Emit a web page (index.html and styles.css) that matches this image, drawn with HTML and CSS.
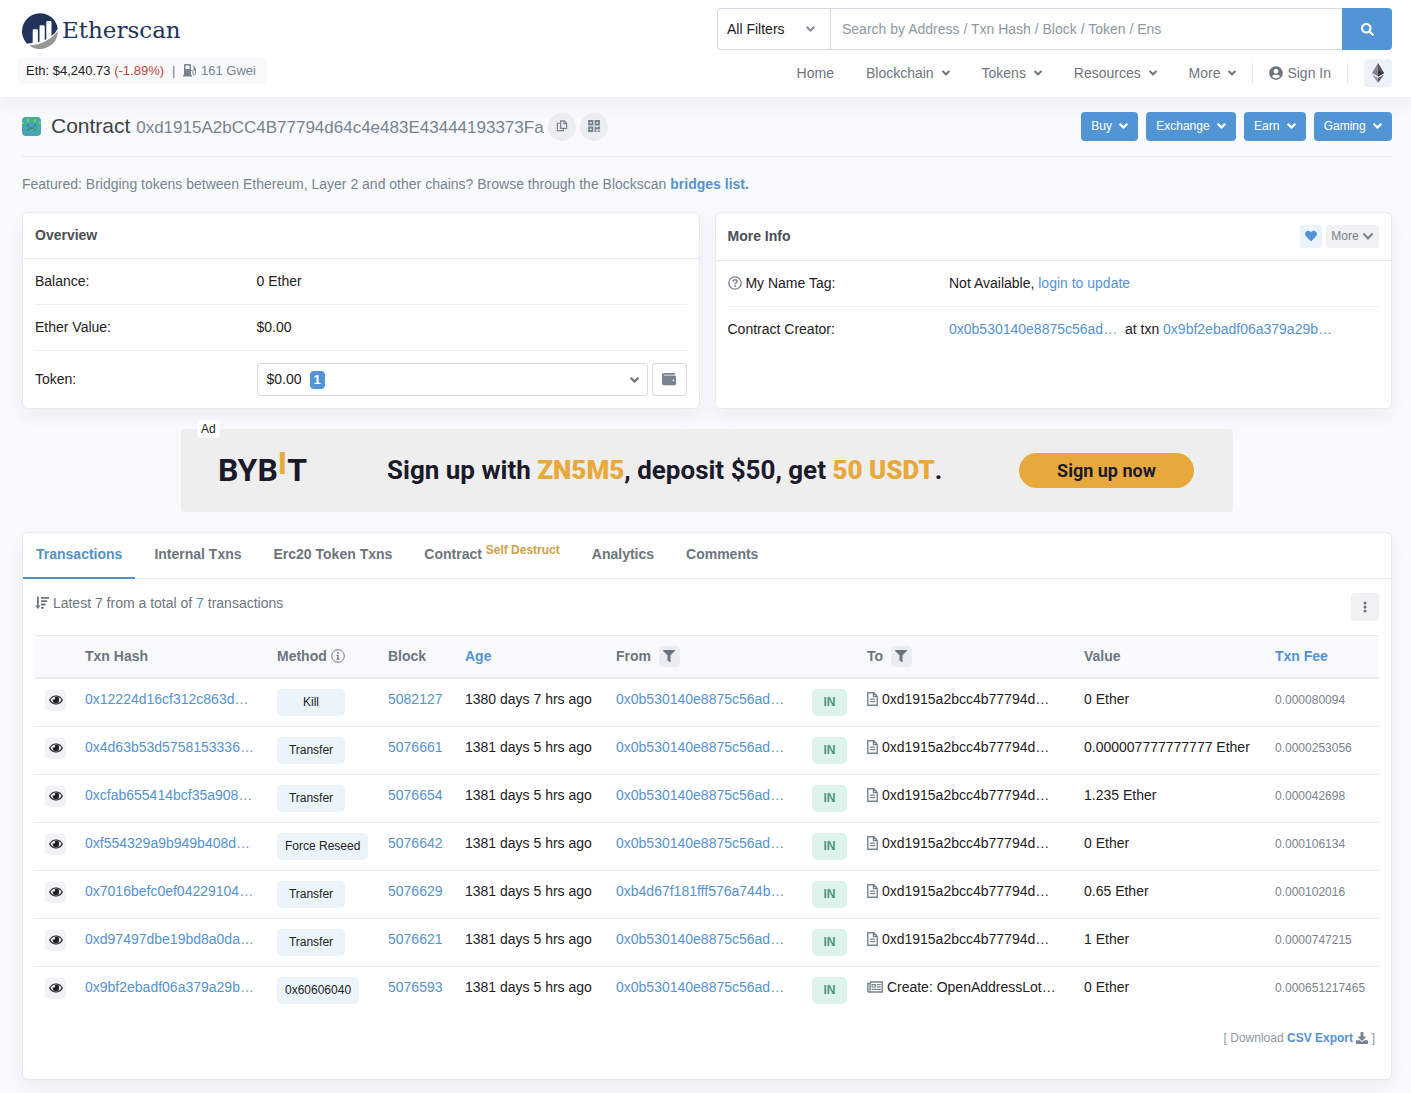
FILE: index.html
```html
<!DOCTYPE html>
<html lang="en">
<head>
  <meta charset="UTF-8" />
  <meta name="viewport" content="width=device-width, initial-scale=1.0" />
  <title>Contract Address | Etherscan</title>
  <link rel="stylesheet" href="styles.css">
</head>
<body>
<!-- Icon sprite -->
<svg class="sprite" aria-hidden="true">
  <symbol id="i-angle" viewBox="0 0 320 512"><path d="M143 352.3L7 216.3c-9.4-9.4-9.4-24.6 0-33.9l22.6-22.6c9.4-9.4 24.6-9.4 33.9 0l96.4 96.4 96.4-96.4c9.4-9.4 24.6-9.4 33.9 0l22.6 22.6c9.4 9.4 9.4 24.6 0 33.9l-136 136c-9.2 9.4-24.4 9.4-33.8 0z"/></symbol>
  <symbol id="i-chevron" viewBox="0 0 12 12"><path d="M1.5 3.5L6 8.5l4.500-5" fill="none" stroke="currentColor" stroke-width="2"/></symbol>
  <symbol id="i-search" viewBox="0 0 512 512"><path d="M505 442.7L405.3 343c-4.5-4.5-10.6-7-17-7H372c27.6-35.3 44-79.7 44-128C416 93.1 322.9 0 208 0S0 93.1 0 208s93.1 208 208 208c48.3 0 92.700-16.4 128-44v16.3c0 6.4 2.5 12.5 7 17l99.7 99.7c9.4 9.4 24.6 9.4 33.9 0l28.3-28.3c9.4-9.4 9.4-24.6.1-34zM208 336c-70.7 0-128-57.2-128-128 0-70.7 57.2-128 128-128 70.7 0 128 57.2 128 128 0 70.7-57.2 128-128 128z"/></symbol>
  <symbol id="i-user" viewBox="0 0 496 512"><path d="M248 8C111 8 0 119 0 256s111 248 248 248 248-111 248-248S385 8 248 8zm0 96c48.6 0 88 39.4 88 88s-39.4 88-88 88-88-39.4-88-88 39.4-88 88-88zm0 344c-58.7 0-111.3-26.6-146.5-68.2 18.8-35.4 55.6-59.8 98.5-59.8 2.4 0 4.8.4 7.1 1.1 13 4.2 26.6 6.9 40.9 6.9 14.3 0 28-2.7 40.9-6.9 2.300-.7 4.700-1.1 7.100-1.1 42.9 0 79.7 24.4 98.5 59.8C359.3 421.4 306.7 448 248 448z"/></symbol>
  <symbol id="i-gas" viewBox="0 0 14 14"><path fill-rule="evenodd" d="M1 12V2Q1 1 2 1h5q1 0 1 1v10h1v1.500H0V12zM2.500 2.500v3.500h4V2.500z"/><path d="M8 7.500h1q1 0 1 1v2q0 1.500 1.200 1.500t1.200-1.500V5.500L10 2.500" fill="none" stroke="currentColor"/><path d="M10.500 4l2 1.500v2h-1.200q-.8 0-.8-.8z"/></symbol>
  <symbol id="i-copy" viewBox="0 0 12 13"><path d="M4.500 1h4l2.500 2.500v5.500H4.500zM8 1v3h3M4.500 3.500H1v8h6.500V9" fill="none" stroke="currentColor" stroke-width="1.300"/></symbol>
  <symbol id="i-qr" viewBox="0 0 12 12"><path d="M1 1h3.500v3.500H1zM7.500 1H11v3.500H7.500zM1 7.500h3.500V11H1z" fill="none" stroke="currentColor" stroke-width="1.800"/><path d="M6.600 6.600h1.800v1H10v-1h2v3H9.500V9H8.400v3H6.600zM9.500 10.500H11V12H9.500zM11.300 10.500h.7V12h-.7z"/></symbol>
  <symbol id="i-heart" viewBox="0 0 512 512"><path d="M462.3 62.6C407.5 15.9 326 24.3 275.7 76.2L256 96.5l-19.7-20.3C186.1 24.3 104.5 15.9 49.7 62.6c-62.8 53.6-66.1 149.8-9.9 207.9l193.5 199.8c12.5 12.9 32.8 12.9 45.3 0l193.5-199.8c56.3-58.1 53-154.3-9.8-207.9z"/></symbol>
  <symbol id="i-wallet" viewBox="0 0 512 512"><path d="M461.2 128H80c-8.840 0-16-7.160-16-16s7.160-16 16-16h384c8.840 0 16-7.160 16-16 0-26.510-21.490-48-48-48H64C28.650 32 0 60.650 0 96v320c0 35.350 28.650 64 64 64h397.200c28.020 0 50.800-21.530 50.800-48V176c0-26.470-22.780-48-50.800-48zM416 336c-17.670 0-32-14.330-32-32s14.330-32 32-32 32 14.330 32 32-14.330 32-32 32z"/></symbol>
  <symbol id="i-question" viewBox="0 0 14 14"><circle cx="7" cy="7" r="6.200" fill="none" stroke="currentColor" stroke-width="1.300"/><path d="M5 5.600Q5.100 3.800 7 3.800t2 1.600q0 1-1 1.500t-1 1.300" fill="none" stroke="currentColor" stroke-width="1.500"/><circle cx="7" cy="10" r="1"/></symbol>
  <symbol id="i-info" viewBox="0 0 14 14"><circle cx="7" cy="7" r="6.300" fill="none" stroke="currentColor"/><circle cx="7" cy="4" r=".9"/><path d="M5.500 6h2.200v3.800h.9v.9H5.400v-.9h.9V6.900h-.8z"/></symbol>
  <symbol id="i-sort" viewBox="0 0 14 13"><path d="M2 0h1.800v9h1.700L2.900 12.500.2 9H2zM6 .5h8v1.800H6zM6 3.800h6.200v1.800H6zM6 7.100h4.500v1.800H6zM6 10.400h2.800v1.800H6z"/></symbol>
  <symbol id="i-dots" viewBox="0 0 4 12"><circle cx="2" cy="2" r="1.500"/><circle cx="2" cy="6" r="1.500"/><circle cx="2" cy="10" r="1.500"/></symbol>
  <symbol id="i-filter" viewBox="0 0 512 512"><path d="M487.976 0H24.028C2.710 0-8.047 25.866 7.058 40.971L192 225.941V432c0 7.831 3.821 15.170 10.237 19.662l80 55.980C298.020 518.690 320 507.493 320 487.980V225.941l184.947-184.970C520.021 25.896 509.338 0 487.976 0z"/></symbol>
  <symbol id="i-eye" viewBox="0 0 14 10"><path d="M.7 5Q3 1 7 1t6.300 4Q11 9 7 9T.7 5z" fill="none" stroke="currentColor" stroke-width="1.200"/><path d="M7 1.800a3.200 3.200 0 1 1-3.100 2.400q1 .6 1.800 0t.2-2.100Q6.500 1.800 7 1.800z"/></symbol>
  <symbol id="i-file" viewBox="0 0 11 14"><path d="M.8.800h6l3.400 3.400v9H.8zM6.500 1v3.500H10" fill="none" stroke="currentColor" stroke-width="1.400"/><path d="M3 6.500h5v1.200H3zM3 9h5v1.200H3z"/></symbol>
  <symbol id="i-news" viewBox="0 0 16 12"><path d="M3 1h12.200v10H2Q.8 11 .8 9.800V2.500H3V10" fill="none" stroke="currentColor" stroke-width="1.400"/><path fill-rule="evenodd" d="M4.500 3h4.500v3.500H4.500zM5.700 4v1.500h2V4zM10 3h3.800v1.100H10zM10 5.300h3.800v1.100H10zM4.500 7.800h9.300V9H4.500z"/></symbol>
  <symbol id="i-download" viewBox="0 0 512 512"><path d="M216 0h80c13.300 0 24 10.700 24 24v168h87.700c17.800 0 26.700 21.500 14.100 34.100L269.700 378.300c-7.500 7.500-19.800 7.500-27.300 0L90.100 226.100c-12.600-12.600-3.700-34.100 14.100-34.100H192V24c0-13.300 10.700-24 24-24zm296 376v112c0 13.300-10.700 24-24 24H24c-13.300 0-24-10.700-24-24V376c0-13.300 10.700-24 24-24h146.700l49 49c20.100 20.100 52.500 20.100 72.600 0l49-49H488c13.300 0 24 10.700 24 24z"/></symbol>
</svg>

<!-- Header -->
<header class="site-header">
  <div class="brand">
    <a href="#" class="logo">
      <svg class="logo-mark" viewBox="0 0 36 36" aria-hidden="true">
        <path fill="#21325b" d="M4.800 30.500A18 18 0 1 1 35.800 15.500q-2 4.500-6.300 7.600V9.200q0-1.200-1.200-1.200h-2.800q-1.200 0-1.200 1.200v17q-.9.500-1.600.8V13.500q0-1.200-1.200-1.200h-2.800q-1.200 0-1.200 1.200v15.300l-1.600.4V17.500q0-1.200-1.200-1.200h-2.800q-1.200 0-1.200 1.200v12.300q-3 .9-5.900.7z"/>
        <path fill="#979695" d="M35.900 18A18 18 0 0 1 7.200 32.400Q25 31.500 35.900 18z"/>
      </svg>
      <span>Etherscan</span>
    </a>
    <div class="price">
      <span>Eth: $4,240.73 <span class="down">(-1.89%)</span></span>
      <span class="bar">|</span>
      <span class="gas"><svg class="icon"><use href="#i-gas"/></svg> 161 Gwei</span>
    </div>
  </div>

  <div class="header-right">
    <form class="search">
      <div class="search-filter">
        <select aria-label="Filter">
          <option>All Filters</option>
          <option>Addresses</option>
          <option>Tokens</option>
        </select>
        <svg class="caret"><use href="#i-angle"/></svg>
      </div>
      <input type="text" aria-label="Search" placeholder="Search by Address / Txn Hash / Block / Token / Ens">
      <button type="button" aria-label="Search"><svg class="icon"><use href="#i-search"/></svg></button>
    </form>
    <nav class="main-nav">
      <a href="#">Home</a>
      <a href="#">Blockchain <svg class="caret"><use href="#i-angle"/></svg></a>
      <a href="#">Tokens <svg class="caret"><use href="#i-angle"/></svg></a>
      <a href="#">Resources <svg class="caret"><use href="#i-angle"/></svg></a>
      <a href="#">More <svg class="caret"><use href="#i-angle"/></svg></a>
      <a href="#" class="sign-in"><svg class="icon"><use href="#i-user"/></svg>Sign In</a>
      <button type="button" class="network" aria-label="Network">
        <svg viewBox="0 0 12 20" aria-hidden="true">
          <path fill="#85868d" d="M6 0l6 10-6 3.500L0 10z"/>
          <path fill="#55565e" d="M6 0l6 10-6 3.500z"/>
          <path fill="#3a3b42" d="M6 7.300l6 2.700-6 3.500z"/>
          <path fill="#96979d" d="M0 11.500L6 15v5z"/>
          <path fill="#5c5d65" d="M12 11.500L6 15v5z"/>
        </svg>
      </button>
    </nav>
  </div>
</header>

<main>
  <!-- Page title -->
  <div class="title-row">
    <svg class="blockie" viewBox="0 0 8 8" shape-rendering="crispEdges" aria-hidden="true">
      <path fill="#49a5b5" d="M0 0h8v8H0z"/>
      <path fill="#45b08f" d="M1 0h6v1H1zM3 1h2v1H3zM1 2h1v1H1zM6 2h1v1H6zM0 3h1v1H0zM7 3h1v1H7zM3 5h2v1H3zM1 6h1v1H1zM6 6h1v1H6z"/>
      <path fill="#62dd62" d="M2 1h1v1H2zM5 1h1v1H5zM0 2h1v1H0zM7 2h1v1H7z"/>
      <path fill="#358a8c" d="M2 3h1v1H2zM5 3h1v1H5zM3 4h2v1H3zM2 5h1v1H2zM5 5h1v1H5z"/>
    </svg>
    <h1>Contract <small>0xd1915A2bCC4B77794d64c4e483E43444193373Fa</small></h1>
    <button type="button" class="round" aria-label="Copy address"><svg class="icon"><use href="#i-copy"/></svg></button>
    <button type="button" class="round" aria-label="Show QR code"><svg class="icon"><use href="#i-qr"/></svg></button>
    <div class="actions">
      <button type="button">Buy <svg class="caret"><use href="#i-angle"/></svg></button>
      <button type="button">Exchange <svg class="caret"><use href="#i-angle"/></svg></button>
      <button type="button">Earn <svg class="caret"><use href="#i-angle"/></svg></button>
      <button type="button">Gaming <svg class="caret"><use href="#i-angle"/></svg></button>
    </div>
  </div>
  <p class="featured">Featured: Bridging tokens between Ethereum, Layer 2 and other chains? Browse through the Blockscan <a href="#">bridges list.</a></p>

  <!-- Summary cards -->
  <div class="summary">
    <section class="card">
      <div class="card-header"><h2>Overview</h2></div>
      <div class="card-body">
        <div class="info-row"><span>Balance:</span><span>0 Ether</span></div>
        <div class="info-row"><span>Ether Value:</span><span>$0.00</span></div>
        <div class="info-row">
          <span>Token:</span>
          <div class="token">
            <button type="button" class="token-select" aria-haspopup="listbox">$0.00 <span class="count">1</span><svg class="caret"><use href="#i-angle"/></svg></button>
            <button type="button" class="token-wallet" aria-label="View tokens"><svg class="icon"><use href="#i-wallet"/></svg></button>
          </div>
        </div>
      </div>
    </section>
    <section class="card">
      <div class="card-header">
        <h2>More Info</h2>
        <button type="button" class="fav" aria-label="Add to favourites"><svg class="icon"><use href="#i-heart"/></svg></button>
        <button type="button" class="more">More <svg class="icon"><use href="#i-chevron"/></svg></button>
      </div>
      <div class="card-body">
        <div class="info-row"><span><svg class="icon muted"><use href="#i-question"/></svg> My Name Tag:</span><span>Not Available, <a href="#">login to update</a></span></div>
        <div class="info-row"><span>Contract Creator:</span><span><a href="#">0x0b530140e8875c56ad…</a>&nbsp; at txn <a href="#">0x9bf2ebadf06a379a29b…</a></span></div>
      </div>
    </section>
  </div>

  <!-- Banner -->
  <div class="ad">
    <span class="ad-label">Ad</span>
    <span class="ad-brand">BYB<i>I</i>T</span>
    <span class="ad-text">Sign up with <b>ZN5M5</b>, deposit $50, get <b>50 USDT</b>.</span>
    <a href="#" class="ad-button">Sign up now</a>
  </div>

  <!-- Transactions -->
  <section class="card">
    <nav class="tabs">
      <a href="#" class="active">Transactions</a>
      <a href="#">Internal Txns</a>
      <a href="#">Erc20 Token Txns</a>
      <a href="#">Contract <span class="destruct">Self Destruct</span></a>
      <a href="#">Analytics</a>
      <a href="#">Comments</a>
    </nav>
    <div class="tab-body">
      <div class="list-top">
        <p><svg class="icon"><use href="#i-sort"/></svg> Latest 7 from a total of <a href="#">7</a> transactions</p>
        <button type="button" aria-label="Options"><svg class="icon"><use href="#i-dots"/></svg></button>
      </div>
      <div class="table-wrap">
        <table>
          <colgroup>
            <col class="c-eye"><col class="c-hash"><col class="c-method"><col class="c-block"><col class="c-age">
            <col class="c-from"><col class="c-dir"><col class="c-to"><col class="c-value"><col class="c-fee">
          </colgroup>
          <thead>
            <tr>
              <th></th>
              <th>Txn Hash</th>
              <th>Method <svg class="icon"><use href="#i-info"/></svg></th>
              <th>Block</th>
              <th><a href="#">Age</a></th>
              <th>From <button type="button" class="filter" aria-label="Filter From"><svg class="icon"><use href="#i-filter"/></svg></button></th>
              <th></th>
              <th>To <button type="button" class="filter" aria-label="Filter To"><svg class="icon"><use href="#i-filter"/></svg></button></th>
              <th>Value</th>
              <th><a href="#">Txn Fee</a></th>
            </tr>
          </thead>
          <tbody>
            <tr>
              <td><button type="button" class="eye" aria-label="Preview"><svg class="icon"><use href="#i-eye"/></svg></button></td>
              <td><a href="#">0x12224d16cf312c863d…</a></td>
              <td><span class="method">Kill</span></td>
              <td><a href="#">5082127</a></td>
              <td>1380 days 7 hrs ago</td>
              <td><a href="#">0x0b530140e8875c56ad…</a></td>
              <td><span class="in">IN</span></td>
              <td><svg class="icon file"><use href="#i-file"/></svg> 0xd1915a2bcc4b77794d…</td>
              <td>0 Ether</td>
              <td class="fee">0.000080094</td>
            </tr>
            <tr>
              <td><button type="button" class="eye" aria-label="Preview"><svg class="icon"><use href="#i-eye"/></svg></button></td>
              <td><a href="#">0x4d63b53d5758153336…</a></td>
              <td><span class="method">Transfer</span></td>
              <td><a href="#">5076661</a></td>
              <td>1381 days 5 hrs ago</td>
              <td><a href="#">0x0b530140e8875c56ad…</a></td>
              <td><span class="in">IN</span></td>
              <td><svg class="icon file"><use href="#i-file"/></svg> 0xd1915a2bcc4b77794d…</td>
              <td>0.000007777777777 Ether</td>
              <td class="fee">0.0000253056</td>
            </tr>
            <tr>
              <td><button type="button" class="eye" aria-label="Preview"><svg class="icon"><use href="#i-eye"/></svg></button></td>
              <td><a href="#">0xcfab655414bcf35a908…</a></td>
              <td><span class="method">Transfer</span></td>
              <td><a href="#">5076654</a></td>
              <td>1381 days 5 hrs ago</td>
              <td><a href="#">0x0b530140e8875c56ad…</a></td>
              <td><span class="in">IN</span></td>
              <td><svg class="icon file"><use href="#i-file"/></svg> 0xd1915a2bcc4b77794d…</td>
              <td>1.235 Ether</td>
              <td class="fee">0.000042698</td>
            </tr>
            <tr>
              <td><button type="button" class="eye" aria-label="Preview"><svg class="icon"><use href="#i-eye"/></svg></button></td>
              <td><a href="#">0xf554329a9b949b408d…</a></td>
              <td><span class="method">Force Reseed</span></td>
              <td><a href="#">5076642</a></td>
              <td>1381 days 5 hrs ago</td>
              <td><a href="#">0x0b530140e8875c56ad…</a></td>
              <td><span class="in">IN</span></td>
              <td><svg class="icon file"><use href="#i-file"/></svg> 0xd1915a2bcc4b77794d…</td>
              <td>0 Ether</td>
              <td class="fee">0.000106134</td>
            </tr>
            <tr>
              <td><button type="button" class="eye" aria-label="Preview"><svg class="icon"><use href="#i-eye"/></svg></button></td>
              <td><a href="#">0x7016befc0ef04229104…</a></td>
              <td><span class="method">Transfer</span></td>
              <td><a href="#">5076629</a></td>
              <td>1381 days 5 hrs ago</td>
              <td><a href="#">0xb4d67f181fff576a744b…</a></td>
              <td><span class="in">IN</span></td>
              <td><svg class="icon file"><use href="#i-file"/></svg> 0xd1915a2bcc4b77794d…</td>
              <td>0.65 Ether</td>
              <td class="fee">0.000102016</td>
            </tr>
            <tr>
              <td><button type="button" class="eye" aria-label="Preview"><svg class="icon"><use href="#i-eye"/></svg></button></td>
              <td><a href="#">0xd97497dbe19bd8a0da…</a></td>
              <td><span class="method">Transfer</span></td>
              <td><a href="#">5076621</a></td>
              <td>1381 days 5 hrs ago</td>
              <td><a href="#">0x0b530140e8875c56ad…</a></td>
              <td><span class="in">IN</span></td>
              <td><svg class="icon file"><use href="#i-file"/></svg> 0xd1915a2bcc4b77794d…</td>
              <td>1 Ether</td>
              <td class="fee">0.0000747215</td>
            </tr>
            <tr>
              <td><button type="button" class="eye" aria-label="Preview"><svg class="icon"><use href="#i-eye"/></svg></button></td>
              <td><a href="#">0x9bf2ebadf06a379a29b…</a></td>
              <td><span class="method">0x60606040</span></td>
              <td><a href="#">5076593</a></td>
              <td>1381 days 5 hrs ago</td>
              <td><a href="#">0x0b530140e8875c56ad…</a></td>
              <td><span class="in">IN</span></td>
              <td><svg class="icon news"><use href="#i-news"/></svg> Create: OpenAddressLot…</td>
              <td>0 Ether</td>
              <td class="fee">0.000651217465</td>
            </tr>
          </tbody>
        </table>
      </div>
      <p class="export">[ Download <a href="#">CSV Export</a> <svg class="icon"><use href="#i-download"/></svg> ]</p>
    </div>
  </section>
</main>
</body>
</html>
```
FILE: styles.css
```css
/* Global Styles */
* {
  box-sizing: border-box;
}
body {
  margin: 0;
  font-family: "Liberation Sans", Arial, sans-serif;
  font-size: 14px;
  line-height: 21px;
  color: #1e2022;
  background: #f8fafd;
}
h1, h2, p {
  margin: 0;
}
a {
  color: #5592d1;
  text-decoration: none;
}
button, input, select {
  font: inherit;
  color: inherit;
  margin: 0;
  padding: 0;
  border: none;
  background: none;
}
button {
  cursor: pointer;
}
.sprite {
  display: none;
}
.icon {
  width: 14px;
  height: 14px;
  fill: currentColor;
  vertical-align: -2px;
}
.caret {
  width: 9px;
  height: 14px;
  fill: currentColor;
  vertical-align: -2px;
}
.muted {
  color: #77838f;
}

/* Header Styles */
.site-header {
  display: flex;
  justify-content: space-between;
  padding: 8px 19px 10px 18px;
  background: #fff;
  box-shadow: 0 8px 19px rgba(189, 197, 209, 0.2);
}
.brand {
  display: flex;
  flex-direction: column;
  align-items: flex-start;
  gap: 8px;
  padding-top: 4px;
}
.logo {
  display: flex;
  align-items: center;
  gap: 4px;
  height: 37px;
  padding-left: 4px;
  font-family: "DejaVu Serif", serif;
  font-size: 23px;
  color: #21325b;
}
.logo-mark {
  width: 36px;
  height: 36px;
}
.price {
  display: flex;
  gap: 8px;
  padding: 0 11px 0 8px;
  border-radius: 5px;
  background: #f8f9fa;
  font-size: 13px;
  line-height: 27px;
}
.price .down {
  color: #c0453f;
}
.price .bar {
  color: #77838f;
}
.price .gas {
  color: #77838f;
}
.header-right {
  display: flex;
  flex-direction: column;
  gap: 9px;
  width: 675px;
}
.search {
  display: flex;
  height: 42px;
}
.search-filter {
  position: relative;
  width: 113px;
  border: 1px solid #d5dae2;
  border-right: none;
  border-radius: 4px 0 0 4px;
}
.search-filter select {
  width: 100%;
  height: 100%;
  padding-left: 9px;
  appearance: none;
}
.search-filter .caret {
  position: absolute;
  right: 15px;
  top: 13px;
  color: #8c98a4;
  pointer-events: none;
}
.search input {
  flex: 1;
  padding: 0 11px;
  border: 1px solid #d5dae2;
  border-right: none;
}
.search input::placeholder {
  color: #8c98a4;
}
.search button {
  width: 50px;
  border-radius: 0 4px 4px 0;
  background: #5295d5;
  color: #fff;
}
.search button .icon {
  width: 13px;
  height: 13px;
}
.main-nav {
  display: flex;
  align-items: center;
  justify-content: flex-end;
  gap: 32px;
  height: 28px;
}
.main-nav a {
  color: #6c757e;
}
.main-nav .caret {
  width: 8px;
  margin-left: 4px;
}
.main-nav .sign-in {
  display: flex;
  align-items: center;
  gap: 4px;
  margin: 0 -16px;
  padding: 0 16px;
  border: 1px solid #e7eaf3;
  border-width: 0 1px;
}
.network {
  display: flex;
  align-items: center;
  justify-content: center;
  width: 28px;
  height: 28px;
  border-radius: 4px;
  background: #ebf2f9;
}
.network svg {
  width: 12px;
  height: 20px;
}

/* Page Title */
main {
  padding: 0 19px 13px 22px;
}
.title-row {
  display: flex;
  align-items: center;
  padding: 15px 0;
  border-bottom: 1px solid #e7eaf3;
}
.blockie {
  width: 19px;
  height: 19px;
  margin-right: 10px;
  border-radius: 4px;
}
.title-row h1 {
  margin-right: 4px;
  font-size: 21px;
  font-weight: normal;
  color: #3d4247;
}
.title-row small {
  font-size: 17px;
  color: #77838f;
}
.round {
  width: 28px;
  height: 28px;
  margin-right: 4px;
  border-radius: 50%;
  background: #ebedf0;
  color: #77838f;
}
.round .icon {
  width: 12px;
  height: 12px;
  vertical-align: -1px;
}
.actions {
  display: flex;
  gap: 8px;
  margin-left: auto;
}
.actions button {
  padding: 4px 10px;
  border-radius: 4px;
  background: #5295d5;
  color: #fff;
  font-size: 12px;
}
.actions .caret {
  margin-left: 4px;
  vertical-align: -3px;
}
.featured {
  padding: 17px 0;
  color: #77838f;
}
.featured a {
  font-weight: bold;
}

/* Cards */
.summary {
  display: grid;
  grid-template-columns: 1fr 1fr;
  gap: 15px;
}
.card {
  border: 1px solid #e7eaf3;
  border-radius: 6px;
  background: #fff;
  box-shadow: 0 8px 19px rgba(189, 197, 209, 0.2);
}
.card-header {
  display: flex;
  align-items: center;
  gap: 4px;
  padding: 12px;
  border-bottom: 1px solid #e7eaf3;
}
.card-header h2 {
  flex: 1;
  font-size: 14px;
  color: #4a4f55;
}
.card-body {
  padding: 0 12px;
}
.info-row {
  display: grid;
  grid-template-columns: 34% 1fr;
  align-items: center;
  padding: 12px 0;
  border-bottom: 1px solid #eef0f5;
}
.info-row:last-child {
  border-bottom: none;
}
.fav, .more {
  height: 23px;
  padding: 0 5px;
  border-radius: 3px;
  font-size: 12px;
}
.fav {
  background: #ebf4fc;
  color: #5295d5;
}
.more {
  background: #f0f1f3;
  color: #77838f;
}
.fav .icon, .more .icon {
  width: 12px;
  height: 12px;
}
.token {
  display: flex;
  gap: 4px;
}
.token button {
  height: 33px;
  border: 1px solid #d5dae2;
  border-radius: 3px;
}
.token-select {
  display: flex;
  flex: 1;
  align-items: center;
  gap: 8px;
  padding: 0 8px 0 9px;
}
.token-select .caret {
  margin-left: auto;
  color: #6c757e;
}
.count {
  padding: 0 4px;
  border-radius: 4px;
  background: #5295d5;
  color: #fff;
  font-size: 13px;
  font-weight: bold;
  line-height: 18px;
}
.token-wallet {
  width: 35px;
  color: #77838f;
}

/* Banner */
.ad {
  position: relative;
  display: flex;
  align-items: center;
  max-width: 1052px;
  height: 83px;
  margin: 20px auto;
  padding: 0 39px 0 37px;
  border-radius: 4px;
  background: #eee;
  color: #1b1a2b;
  font-family: Roboto, "Liberation Sans", sans-serif;
  font-weight: bold;
}
.ad-label {
  position: absolute;
  top: -9px;
  left: 16px;
  padding: 0 4px;
  border-radius: 4px;
  background: #fff;
  color: #1e2022;
  font: 12px/18px "Liberation Sans", Arial, sans-serif;
}
.ad-brand {
  display: flex;
  align-items: center;
  width: 169px;
  font-size: 32px;
}
.ad-brand i {
  padding-bottom: 14px;
  color: #e8a93c;
  font-style: normal;
}
.ad-text {
  flex: 1;
  font-size: 26px;
}
.ad-text b {
  color: #e8a93c;
}
.ad-button {
  width: 175px;
  border-radius: 18px;
  background: #e8a93c;
  color: #1b1a2b;
  font-size: 18px;
  line-height: 35px;
  text-align: center;
}

/* Tabs */
.tabs {
  display: flex;
  gap: 6px;
  border-bottom: 1px solid #e7eaf3;
}
.tabs a {
  margin-bottom: -1px;
  padding: 11px 13px 12px;
  border-bottom: 2px solid transparent;
  color: #6c757e;
  font-weight: bold;
}
.tabs .active {
  border-color: #5592c5;
  color: #5592c5;
}
.destruct {
  color: #d0a04a;
  font-size: 12px;
  vertical-align: 5px;
  line-height: 1;
}
.tab-body {
  padding: 14px 12px 30px;
}
.list-top {
  display: flex;
  align-items: flex-start;
  justify-content: space-between;
  margin-bottom: 14px;
  color: #6c757e;
}
.list-top button {
  width: 28px;
  height: 28px;
  border-radius: 4px;
  background: #f0f1f3;
}
.list-top button .icon {
  width: 4px;
  height: 12px;
  vertical-align: -1px;
}

/* Transactions Table */
.table-wrap {
  overflow-x: auto;
}
table {
  width: 100%;
  min-width: 1300px;
  table-layout: fixed;
  border-spacing: 0;
}
.c-eye { width: 50px; }
.c-hash { width: 192px; }
.c-method { width: 111px; }
.c-block { width: 77px; }
.c-age { width: 151px; }
.c-from { width: 196px; }
.c-dir { width: 55px; }
.c-to { width: 217px; }
.c-value { width: 191px; }
th {
  height: 44px;
  padding: 0;
  border-top: 1px solid #e7eaf3;
  border-bottom: 2px solid #e7eaf3;
  background: #f8fafd;
  color: #6c757e;
  text-align: left;
}
td {
  height: 48px;
  padding: 10px 0 0;
  border-bottom: 1px solid #e7eaf3;
  vertical-align: top;
  white-space: nowrap;
}
tr:last-child td {
  border-bottom: none;
}
.filter {
  width: 21px;
  height: 21px;
  margin-left: 4px;
  border-radius: 4px;
  background: #e9ecf1;
}
.filter .icon {
  width: 12px;
  height: 12px;
  vertical-align: -1px;
}
.eye {
  display: block;
  width: 21px;
  height: 21px;
  margin: 1px 0 0 10px;
  border-radius: 4px;
  background: #f1f2f4;
}
.eye .icon {
  height: 10px;
  vertical-align: 0;
}
.method, .in {
  display: inline-block;
  border-radius: 5px;
  font-size: 12px;
  line-height: 27px;
  text-align: center;
}
.method {
  min-width: 68px;
  padding: 0 8px;
  background: #ebf4fb;
}
.in {
  width: 35px;
  background: #def3ec;
  color: #4b9480;
  font-weight: bold;
}
.file, .news {
  color: #77838f;
}
.file {
  width: 11px;
}
.news {
  width: 16px;
}
td.fee {
  padding-top: 11px;
  color: #77838f;
  font-size: 12px;
}
.export {
  padding: 13px 4px 0;
  color: #8c98a4;
  font-size: 12px;
  text-align: right;
}
.export a {
  font-weight: bold;
}
.export .icon {
  width: 12px;
  height: 12px;
  color: #77838f;
}

/* Responsive adjustments */
@media (max-width: 1000px) {
  .site-header, .title-row, .tabs {
    flex-wrap: wrap;
  }
  .header-right {
    width: 100%;
  }
  .summary {
    grid-template-columns: 1fr;
  }
}
```
